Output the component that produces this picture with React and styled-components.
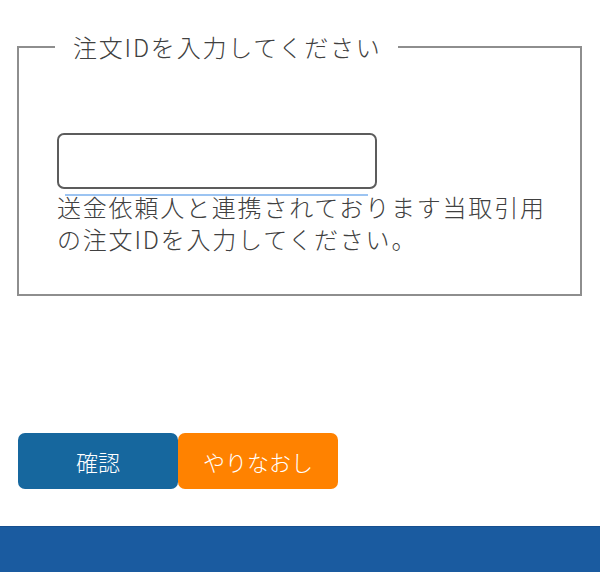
import React from "react";
import styled, { createGlobalStyle } from "styled-components";

const GlobalStyle = createGlobalStyle`
  html, body {
    margin: 0;
    padding: 0;
    background: #ffffff;
  }
  body {
    font-family: "Noto Sans CJK JP", "Noto Sans", sans-serif;
    color: #404040;
  }
`;

const Page = styled.div`
  width: 600px;
  min-height: 572px;
  display: flex;
  flex-direction: column;
  overflow: hidden;
`;

const Main = styled.main`
  padding: 30px 18px 0 17px;
`;

const Fieldset = styled.fieldset`
  margin: 0;
  padding: 0 14px 39px 38px;
  border: 2px solid #8e8e8e;
  min-width: 0;
`;

const Legend = styled.legend`
  margin-left: -2px;
  padding: 0 16px 0 18px;
  font-size: 24px;
  font-weight: 300;
  letter-spacing: 1.8px;
  line-height: 34px;
  color: #404040;
`;

const InputWrap = styled.div`
  position: relative;
  width: 320px;
  margin-top: 69px;

  &::after {
    content: "";
    position: absolute;
    left: 8px;
    bottom: -7px;
    width: 303px;
    height: 2px;
    background: #9cc4f2;
  }
`;

const TextInput = styled.input`
  display: block;
  box-sizing: border-box;
  width: 320px;
  height: 56px;
  margin: 0;
  padding: 0 12px;
  border: 2px solid #5c5c5c;
  border-radius: 7px;
  background: #ffffff;
  font-family: inherit;
  font-size: 22px;
  outline: none;
`;

const Note = styled.p`
  margin: 2px 0 0;
  font-size: 24px;
  font-weight: 300;
  letter-spacing: 1.8px;
  line-height: 32px;
  color: #404040;
`;

const ButtonRow = styled.div`
  display: flex;
  margin-top: 137px;
  margin-left: 1px;
`;

const Button = styled.button`
  width: 160px;
  height: 56px;
  border: none;
  border-radius: 7px;
  background: ${props => (props.reset ? "#ff8200" : "#16679e")};
  color: #ffffff;
  font-family: inherit;
  font-size: 22px;
  font-weight: 300;
  cursor: pointer;
  padding: 0;
`;

const Footer = styled.footer`
  margin-top: 37px;
  height: 46px;
  background: #1a5ba0;
  border-top: 1px solid #164f8e;
`;

export default function App() {
  return (
    <Page>
      <GlobalStyle />
      <Main>
        <Fieldset>
          <Legend>注文IDを入力してください</Legend>
          <InputWrap>
            <TextInput type="text" />
          </InputWrap>
          <Note>
            送金依頼人と連携されております当取引用の注文IDを入力してください。
          </Note>
        </Fieldset>
        <ButtonRow>
          <Button>確認</Button>
          <Button reset>やりなおし</Button>
        </ButtonRow>
      </Main>
      <Footer />
    </Page>
  );
}
